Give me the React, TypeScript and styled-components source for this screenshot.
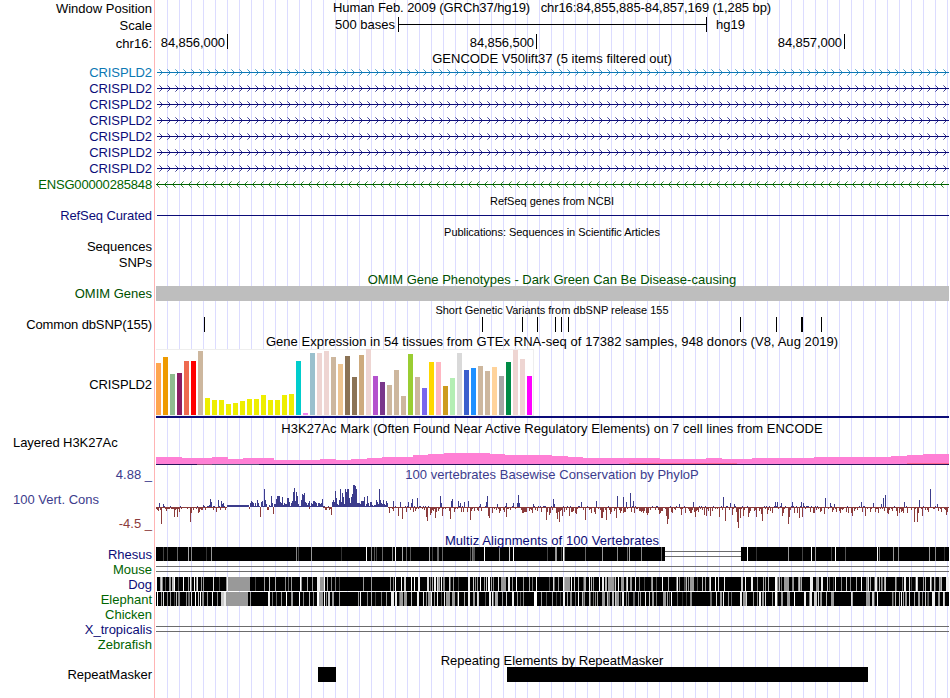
import * as React from 'react'
import styled, { createGlobalStyle } from 'styled-components'

const LEFT = 156
const WIDTH = 793

const colors = {
  black: '#000000',
  navy: '#0c0c78',
  blue: '#0c78b4',
  green: '#006400',
  omim: '#005000',
  wiggle: '#3c3c8c',
  wiggleDown: '#8c3c3c',
}

// x, height of the bar above the baseline
const peaksUp = [
  [159, 4], [163, 3], [164, 1], [203, 2], [209, 2], [210, 8], [211, 5], [213, 1], [218, 7], [221, 6], [222, 3],
  [223, 4], [251, 6], [252, 5], [257, 7], [261, 5], [262, 6], [264, 18], [265, 7], [266, 3], [271, 11], [275, 3],
  [276, 8], [277, 11], [278, 11], [279, 11], [280, 5], [281, 4], [282, 10], [284, 4], [285, 3], [286, 3],
  [287, 9], [288, 9], [289, 5], [292, 6], [293, 15], [294, 19], [295, 6], [296, 15], [297, 11], [298, 3],
  [301, 7], [302, 13], [303, 12], [304, 14], [305, 5], [309, 6], [313, 6], [314, 6], [315, 5], [322, 8],
  [332, 5], [333, 7], [334, 5], [335, 16], [336, 9], [339, 7], [340, 18], [341, 5], [342, 14], [343, 10],
  [344, 3], [345, 18], [346, 15], [347, 18], [348, 18], [349, 9], [350, 4], [351, 10], [352, 13], [353, 22],
  [354, 22], [355, 21], [356, 18], [357, 4], [361, 6], [362, 6], [363, 6], [364, 10], [367, 11], [370, 5],
  [371, 5], [376, 7], [377, 5], [379, 18], [380, 7], [383, 7], [386, 6], [387, 4], [393, 6], [400, 5], [408, 5],
  [411, 5], [412, 8], [417, 9], [411, 4], [440, 11], [441, 4], [451, 6], [452, 8], [458, 6], [460, 4], [464, 5],
  [468, 6], [480, 3], [486, 5], [487, 11], [497, 3], [506, 4], [513, 4], [517, 4], [518, 12], [519, 4], [533, 3],
  [553, 8], [554, 3], [581, 5], [596, 6], [617, 11], [623, 10], [626, 5], [630, 14], [633, 6], [679, 3],
  [693, 5], [723, 10], [730, 4], [734, 3], [775, 5], [777, 5], [781, 4], [792, 5], [801, 5], [803, 4], [825, 9],
  [830, 4], [834, 3], [861, 5], [873, 4], [881, 3], [883, 9], [885, 12], [904, 5], [919, 7], [930, 18], [937, 3],
]

const peaksDown = [
  [157, 3], [158, 4], [161, 17], [166, 4], [174, 10], [177, 10], [179, 5], [190, 15], [191, 6], [193, 3],
  [198, 6], [199, 5], [201, 3], [205, 3], [213, 3], [216, 5], [225, 3], [249, 2], [260, 10], [267, 3], [268, 3],
  [273, 7], [309, 2], [325, 3], [326, 3], [331, 8], [389, 6], [393, 4], [398, 9], [402, 12], [426, 10],
  [427, 14], [430, 8], [435, 11], [442, 9], [450, 12], [470, 13], [471, 4], [488, 9], [489, 11], [492, 6],
  [499, 6], [506, 10], [525, 5], [526, 5], [546, 13], [549, 8], [557, 12], [559, 15], [562, 9], [569, 9],
  [571, 5], [576, 7], [585, 13], [595, 7], [601, 11], [602, 11], [606, 13], [610, 7], [616, 11], [623, 6],
  [631, 5], [639, 4], [647, 8], [659, 7], [666, 9], [667, 17], [668, 12], [681, 8], [690, 6], [691, 6],
  [695, 10], [704, 8], [706, 9], [710, 9], [719, 10], [725, 14], [732, 8], [737, 15], [738, 21], [740, 11],
  [743, 9], [748, 10], [756, 10], [761, 7], [762, 14], [767, 7], [782, 9], [783, 6], [788, 17], [789, 10],
  [794, 6], [799, 11], [802, 10], [814, 6], [824, 7], [832, 5], [848, 6], [852, 9], [865, 9], [878, 6],
  [888, 7], [897, 9], [914, 15], [917, 15], [922, 9], [941, 5], [946, 8],
]

const pseudo = (x: number, seed: number) => {
  const v = Math.sin(x * 12.9898 + seed * 78.233) * 43758.5453
  return v - Math.floor(v)
}

const gtexBars: [string, number][] = [
  ['#ffa54f', 52], ['#ee9a00', 58], ['#8fbc8f', 41], ['#8b1c62', 42], ['#ee6a50', 54], ['#ff0000', 54],
  ['#cdb79e', 64], ['#eeee00', 17], ['#eeee00', 15], ['#eeee00', 15], ['#eeee00', 11], ['#eeee00', 12],
  ['#eeee00', 14], ['#eeee00', 16], ['#eeee00', 16], ['#eeee00', 20], ['#eeee00', 15], ['#eeee00', 15],
  ['#eeee00', 20], ['#eeee00', 21], ['#00cdcd', 54], ['#ee82ee', 2], ['#9ac0cd', 62], ['#eed5d2', 62],
  ['#eed5d2', 64], ['#cdb79e', 58], ['#eec591', 51], ['#8b7355', 59], ['#8b7355', 38], ['#cdaa7d', 60],
  ['#eed5d2', 66], ['#b452cd', 39], ['#7a378b', 33], ['#cdb79e', 30], ['#cdb79e', 45], ['#cdb79e', 19],
  ['#9acd32', 61], ['#cdb79e', 38], ['#7a67ee', 27], ['#ffd700', 53], ['#ffb6c1', 53], ['#cd9b1d', 29],
  ['#b4eeb4', 37], ['#d9d9d9', 62], ['#3a5fcd', 45], ['#1e90ff', 47], ['#cdb79e', 49], ['#cdb79e', 44],
  ['#ffd39b', 48], ['#a6a6a6', 39], ['#008b45', 53], ['#eed5d2', 65], ['#eed5d2', 56], ['#ff00ff', 39],
]

// start x, height
const h3k27ac = [
  [156, 7], [182, 6], [212, 7], [228, 5], [243, 6], [274, 4], [320, 5], [336, 4], [351, 5], [367, 6], [382, 7],
  [413, 9], [428, 10], [444, 11], [490, 10], [505, 9], [552, 8], [568, 7], [583, 6], [660, 5], [706, 6],
  [722, 5], [752, 6], [814, 7], [891, 8], [907, 9], [923, 10], [949, 10],
]

const snps = [204, 482, 522, 537, 555, 561, 568, 740, 776, 801, 802, 821]

// x, width, grey level (0-15)
type Stripe = [number, number, number]

const rhesus: Stripe[] = [
  [163, 1, 4], [167, 1, 4], [177, 1, 6], [188, 1, 10], [191, 1, 8], [206, 1, 3], [211, 1, 9], [296, 1, 8],
  [298, 1, 4], [311, 1, 9], [341, 1, 3], [366, 1, 15], [371, 1, 8], [374, 1, 5], [376, 1, 4], [382, 1, 6],
  [392, 1, 9], [395, 1, 15], [402, 1, 10], [406, 1, 6], [410, 1, 5], [429, 1, 10], [432, 1, 4], [437, 2, 6],
  [442, 1, 6], [470, 1, 5], [472, 1, 7], [473, 2, 5], [484, 1, 15], [499, 1, 8], [509, 1, 12], [513, 1, 15],
  [547, 1, 4], [555, 2, 9], [561, 1, 4], [563, 1, 15], [564, 1, 8], [585, 1, 6], [602, 1, 9], [617, 1, 8],
  [627, 1, 6], [629, 1, 10], [641, 1, 8], [661, 1, 6], [747, 1, 15], [756, 1, 3], [788, 1, 9], [802, 1, 4],
  [811, 1, 15], [815, 1, 9], [831, 1, 4], [835, 1, 15], [845, 1, 5], [877, 1, 15], [879, 1, 7], [893, 1, 9],
  [898, 1, 8], [929, 1, 9], [935, 1, 8], [944, 1, 3],
]

const dog: Stripe[] = [
  [156, 1, 15], [160, 1, 10], [161, 1, 13], [162, 1, 8], [165, 1, 5], [169, 2, 9], [172, 2, 11], [174, 1, 15],
  [178, 1, 5], [183, 1, 15], [188, 1, 9], [190, 1, 14], [191, 1, 7], [194, 1, 15], [196, 1, 8], [197, 1, 14],
  [201, 1, 9], [203, 1, 9], [213, 1, 13], [219, 1, 4], [226, 1, 9], [227, 1, 14], [228, 22, 9], [255, 1, 4],
  [264, 1, 9], [269, 1, 12], [275, 1, 10], [285, 1, 8], [288, 1, 6], [291, 1, 9], [300, 1, 15], [301, 1, 9],
  [307, 1, 10], [312, 1, 9], [317, 3, 14], [320, 4, 9], [324, 1, 15], [327, 1, 10], [331, 1, 8], [335, 1, 7],
  [339, 1, 4], [363, 1, 9], [371, 1, 9], [390, 1, 9], [393, 1, 8], [395, 1, 15], [401, 1, 15], [404, 2, 12],
  [411, 1, 15], [414, 1, 15], [418, 2, 14], [427, 2, 13], [430, 1, 7], [432, 1, 10], [434, 2, 14], [438, 1, 9],
  [441, 1, 15], [443, 2, 8], [450, 1, 6], [453, 1, 9], [458, 1, 4], [468, 2, 14], [473, 1, 12], [477, 1, 9],
  [480, 1, 15], [484, 1, 9], [488, 2, 15], [491, 1, 10], [493, 1, 8], [498, 1, 13], [501, 5, 9], [508, 2, 14],
  [512, 1, 9], [516, 1, 15], [523, 1, 9], [529, 1, 10], [536, 1, 15], [549, 1, 5], [558, 1, 9], [563, 1, 15],
  [565, 5, 9], [571, 1, 15], [578, 1, 11], [584, 2, 10], [589, 1, 15], [593, 1, 9], [599, 1, 15], [602, 2, 14],
  [605, 2, 11], [608, 6, 9], [615, 1, 12], [618, 1, 15], [621, 3, 9], [627, 1, 14], [630, 2, 9], [635, 1, 14],
  [639, 1, 8], [644, 1, 4], [651, 1, 8], [656, 1, 5], [662, 1, 15], [668, 1, 10], [677, 1, 15], [679, 1, 8],
  [684, 1, 5], [688, 1, 9], [690, 4, 9], [697, 1, 5], [705, 1, 9], [710, 1, 14], [715, 1, 15], [724, 1, 14],
  [741, 2, 12], [745, 1, 15], [751, 2, 14], [757, 1, 8], [765, 1, 9], [768, 1, 11], [775, 2, 15], [784, 5, 9],
  [792, 1, 8], [799, 1, 12], [801, 1, 10], [810, 3, 14], [816, 2, 9], [821, 2, 14], [829, 1, 5], [835, 1, 15],
  [841, 1, 8], [846, 1, 12], [850, 1, 8], [861, 1, 15], [866, 1, 9], [868, 1, 13], [875, 2, 14], [881, 1, 9],
  [885, 1, 12], [895, 1, 10], [902, 1, 7], [904, 2, 14], [909, 1, 13], [916, 1, 15], [923, 1, 9], [930, 1, 14],
  [934, 1, 11], [940, 1, 8], [946, 3, 14],
]

const elephant: Stripe[] = [
  [157, 1, 15], [161, 1, 9], [163, 1, 13], [167, 1, 8], [170, 1, 9], [174, 1, 4], [176, 1, 11], [178, 2, 8],
  [186, 1, 8], [188, 2, 6], [191, 1, 13], [195, 1, 15], [198, 1, 12], [200, 1, 15], [202, 2, 8], [207, 1, 9],
  [212, 1, 14], [217, 1, 8], [221, 3, 12], [224, 2, 14], [226, 22, 9], [250, 1, 9], [268, 2, 14], [272, 1, 7],
  [276, 1, 6], [281, 1, 9], [286, 1, 15], [291, 2, 9], [299, 1, 15], [303, 1, 8], [309, 1, 11], [313, 1, 8],
  [317, 2, 15], [319, 4, 9], [324, 1, 15], [326, 1, 8], [328, 2, 12], [332, 2, 9], [339, 1, 9], [358, 1, 9],
  [360, 1, 14], [367, 1, 8], [371, 1, 10], [375, 1, 4], [381, 1, 7], [386, 1, 9], [391, 3, 14], [395, 2, 14],
  [400, 3, 9], [404, 3, 9], [417, 2, 14], [426, 1, 8], [428, 3, 9], [431, 1, 14], [434, 1, 9], [437, 1, 14],
  [441, 1, 5], [444, 1, 14], [446, 4, 9], [453, 2, 9], [458, 1, 15], [464, 1, 10], [468, 2, 14], [473, 2, 9],
  [478, 1, 12], [485, 1, 5], [489, 2, 14], [492, 1, 14], [495, 2, 10], [502, 1, 9], [506, 1, 12], [512, 2, 14],
  [517, 1, 9], [523, 1, 8], [534, 3, 15], [541, 1, 9], [546, 1, 5], [552, 1, 9], [563, 2, 14], [567, 1, 10],
  [570, 2, 8], [575, 1, 6], [578, 1, 15], [584, 1, 8], [589, 1, 12], [597, 1, 10], [602, 3, 9], [607, 1, 12],
  [612, 2, 11], [616, 3, 9], [622, 2, 14], [628, 1, 8], [633, 2, 6], [640, 1, 9], [645, 1, 14], [652, 1, 9],
  [656, 1, 7], [663, 3, 9], [671, 1, 15], [677, 1, 6], [682, 1, 3], [686, 1, 4], [691, 1, 8], [710, 2, 6],
  [716, 1, 13], [720, 2, 9], [723, 1, 14], [731, 1, 6], [740, 2, 14], [743, 3, 9], [753, 1, 9], [759, 2, 14],
  [762, 2, 9], [765, 1, 13], [772, 1, 9], [775, 2, 15], [781, 2, 9], [787, 3, 9], [794, 1, 15], [804, 2, 14],
  [810, 2, 14], [814, 3, 12], [820, 1, 8], [826, 1, 11], [831, 3, 9], [852, 1, 10], [866, 4, 9], [872, 2, 12],
  [877, 1, 15], [892, 1, 8], [895, 1, 11], [901, 1, 14], [905, 2, 9], [909, 1, 13], [914, 1, 10], [918, 2, 9],
  [925, 1, 12], [932, 3, 14], [938, 2, 9], [943, 1, 13],
]

// single-base mismatches between the larger stripes, left out of fully aligned blocks
const mismatches = (seed: number, aligned: [number, number][]): Stripe[] => {
  const stripes: Stripe[] = []
  for (let x = 385; x < LEFT + WIDTH; x++) {
    const blocked = aligned.some(([from, to]) => x >= from && x < to)
    if (!blocked && pseudo(x, seed) > 0.87) {
      stripes.push([x, 1, 4 + Math.floor(pseudo(x, seed + 1) * 10)])
    }
  }
  return stripes
}

const dogStripes = [...mismatches(11, [[454, 467], [538, 548], [725, 741], [836, 841]]), ...dog]
const elephantStripes = [...mismatches(23, [[524, 534], [692, 710], [836, 851], [853, 865], [878, 891]]), ...elephant]

const grey = (level: number) => `rgb(${level * 17}, ${level * 17}, ${level * 17})`

const Drawing: React.FC<{ height: number; children: React.ReactNode }> = ({ height, children }) => (
  <Canvas width={WIDTH} height={height} viewBox={`${LEFT} 0 ${WIDTH} ${height}`} shapeRendering="crispEdges">
    {children}
  </Canvas>
)

const Arrows: React.FC<{ color: string; reverse?: boolean }> = ({ color, reverse }) => {
  const inner = []
  const outer = []
  for (let x = reverse ? 156 : 162; x < LEFT + WIDTH; x += 8) {
    const back = reverse ? 1 : -1
    inner.push(`M${x + back} 6h1v1h-1zM${x + back} 8h1v1h-1zM${x + back * 2} 5h1v1h-1zM${x + back * 2} 9h1v1h-1z`)
    outer.push(`M${x + back * 3} 4h1v1h-1zM${x + back * 3} 10h1v1h-1z`)
  }
  return (
    <Drawing height={16}>
      <rect x={reverse ? 156 : 157} y={7} width={WIDTH} height={1} fill={color} />
      <path d={inner.join('')} fill={color} fillOpacity={0.8} />
      <path d={outer.join('')} fill={color} fillOpacity={0.5} />
    </Drawing>
  )
}

const Wiggle = () => {
  const up = new Map(peaksUp.map(p => [p[0], p[1]] as [number, number]))
  const down = new Map(peaksDown.map(p => [p[0], p[1]] as [number, number]))
  const bars = []
  for (let x = LEFT; x < LEFT + WIDTH; x++) {
    const conserved = (x > 226 && x < 323) || (x > 331 && x < 388)
    const r = pseudo(x, 3)
    let top = up.get(x) || 0
    let bottom = down.get(x) || 0
    if (!top && !bottom) {
      if (conserved) {
        top = x < 250 ? 2 : 1 + Math.floor(r * 4)
      } else if (r > 0.78) {
        top = 1
      } else {
        bottom = 1 + Math.floor(Math.pow(pseudo(x, 7), 2.2) * (x < 400 ? 3 : 6))
      }
    }
    if (top) {
      bars.push(<rect key={`u${x}`} x={x} y={24 - top} width={1} height={top} fill={colors.wiggle} />)
    }
    if (bottom || !conserved) {
      bars.push(<rect key={`d${x}`} x={x} y={24} width={1} height={bottom || 1} fill={colors.wiggleDown} />)
    }
  }
  return <Drawing height={49}>{bars}</Drawing>
}

const Stripes: React.FC<{ stripes: Stripe[]; gap?: [number, number] }> = ({ stripes, gap = [LEFT, 0] }) => (
  <Drawing height={15}>
    <rect x={LEFT} y={0} width={gap[0] - LEFT} height={14} fill="#000" />
    <rect x={gap[0] + gap[1]} y={0} width={LEFT + WIDTH - gap[0] - gap[1]} height={14} fill="#000" />
    {stripes.map(([x, width, level], i) => (
      <rect key={i} x={x} y={0} width={width} height={14} fill={grey(level)} />
    ))}
    <rect x={gap[0]} y={4} width={gap[1]} height={1} fill="#6c6c6c" />
    <rect x={gap[0]} y={9} width={gap[1]} height={1} fill="#6c6c6c" />
  </Drawing>
)

const DoubleLine = () => (
  <Drawing height={15}>
    <rect x={LEFT} y={4} width={WIDTH} height={1} fill="#6c6c6c" />
    <rect x={LEFT} y={9} width={WIDTH} height={1} fill="#6c6c6c" />
  </Drawing>
)

const Layered = () => (
  <Drawing height={28}>
    {h3k27ac.slice(0, -1).map(([x, height], i) => (
      <rect key={x} x={x} y={27 - height} width={h3k27ac[i + 1][0] - x} height={height} fill="#ff80d5" />
    ))}
    <rect x={629} y={26} width={108} height={1} fill="#ff6490" />
    <rect x={907} y={26} width={42} height={1} fill="#ff6490" />
    <rect x={LEFT} y={27} width={WIDTH} height={1} fill="#28145a" />
    <rect x={197} y={27} width={15} height={1} fill="#8c5078" />
    <rect x={212} y={27} width={47} height={1} fill="#505078" />
  </Drawing>
)

const Track: React.FC<{
  label?: string
  height?: number
  color?: string
  shift?: number
  spacing?: number
  children?: React.ReactNode
}> = ({ label, height = 16, color = colors.black, shift = 0, spacing = 0, children }) => (
  <Row $height={height}>
    <Label $color={color} $shift={shift} $spacing={spacing}>
      {label}
    </Label>
    <Data>{children}</Data>
  </Row>
)

const genes = [colors.blue, colors.navy, colors.navy, colors.navy, colors.navy, colors.navy, colors.navy]

const App = () => (
  <>
    <GlobalStyle />
    <Browser>
      <Track label="Window Position" height={17}>
        <Title $shift={-1} $spacing={-0.08}>
          {'Human Feb. 2009 (GRCh37/hg19)   chr16:84,855,885-84,857,169 (1,285 bp)'}
        </Title>
      </Track>
      <Track label="Scale" height={17}>
        <ScaleLine>
          <ScaleText>500 bases</ScaleText>
          <ScaleBar />
          <ScaleText>hg19</ScaleText>
        </ScaleLine>
      </Track>
      <Track label="chr16:" height={16} shift={1}>
        <Ruler>
          <Position $width={72}>84,856,000</Position>
          <Position $width={309}>84,856,500</Position>
          <Position $width={308}>84,857,000</Position>
        </Ruler>
      </Track>
      <Track height={15}>
        <Title $shift={1} $spacing={0.03}>
          GENCODE V50lift37 (5 items filtered out)
        </Title>
      </Track>
      {genes.map((color, i) => (
        <Track key={i} label="CRISPLD2" color={color} shift={-1} spacing={-0.1}>
          <Arrows color={color} />
        </Track>
      ))}
      <Track label="ENSG00000285848" color={colors.green} shift={-1} spacing={-0.17}>
        <Arrows color={colors.green} reverse />
      </Track>
      <Track height={15}>
        <Title $small $shift={1}>
          RefSeq genes from NCBI
        </Title>
      </Track>
      <Track label="RefSeq Curated" color={colors.navy} shift={-1} spacing={-0.1}>
        <Drawing height={16}>
          <rect x={157} y={7} width={792} height={1} fill={colors.navy} />
        </Drawing>
      </Track>
      <Track height={15}>
        <Title $small $shift={1} $spacing={-0.04}>
          Publications: Sequences in Scientific Articles
        </Title>
      </Track>
      <Track label="Sequences" shift={-1} />
      <Track label="SNPs" shift={-1} />
      <Track height={15}>
        <Title $color={colors.omim} $shift={1}>
          OMIM Gene Phenotypes - Dark Green Can Be Disease-causing
        </Title>
      </Track>
      <Track label="OMIM Genes" height={15} color={colors.omim}>
        <OmimBar />
      </Track>
      <Track height={16}>
        <Title $small $shift={1}>
          Short Genetic Variants from dbSNP release 155
        </Title>
      </Track>
      <Track label="Common dbSNP(155)" shift={-1} spacing={-0.12}>
        <Drawing height={16}>
          {snps.map(x => (
            <rect key={x} x={x} y={0} width={1} height={15} fill="#000" />
          ))}
        </Drawing>
      </Track>
      <Track height={16}>
        <Title $spacing={0.055}>
          Gene Expression in 54 tissues from GTEx RNA-seq of 17382 samples, 948 donors (V8, Aug 2019)
        </Title>
      </Track>
      <Track label="CRISPLD2" height={69} shift={1} spacing={-0.1}>
        <Drawing height={69}>
          <rect x={156} y={0} width={378} height={67} fill="#eeeeee" />
          <rect x={156} y={1} width={377} height={65} fill="#ffffff" />
          {gtexBars.map(([color, height], i) => (
            <rect key={i} x={156 + i * 7} y={66 - height} width={5} height={height} fill={color} />
          ))}
          <rect x={LEFT} y={67} width={WIDTH} height={2} fill={colors.navy} />
        </Drawing>
      </Track>
      <Track height={19}>
        <Title $shift={1} $spacing={0.045}>
          H3K27Ac Mark (Often Found Near Active Regulatory Elements) on 7 cell lines from ENCODE
        </Title>
      </Track>
      <Row $height={28}>
        <LeftLabel $color={colors.black} $shift={-9} $spacing={-0.06}>
          Layered H3K27Ac
        </LeftLabel>
        <Data>
          <Layered />
        </Data>
      </Row>
      <Track label="4.88 _" height={18} color={colors.wiggle}>
        <Title $color={colors.wiggle} $spacing={0.035}>
          100 vertebrates Basewise Conservation by PhyloP
        </Title>
      </Track>
      <Row $height={49}>
        <WiggleLabels>
          <LeftLabel $color={colors.wiggle} $shift={8}>
            100 Vert. Cons
          </LeftLabel>
          <Label $color={colors.wiggleDown} $shift={8}>
            -4.5 _
          </Label>
        </WiggleLabels>
        <Data>
          <Wiggle />
        </Data>
      </Row>
      <Track height={15}>
        <Title $color={colors.navy} $shift={1} $spacing={0.09}>
          Multiz Alignments of 100 Vertebrates
        </Title>
      </Track>
      <Track label="Rhesus" height={15} color={colors.navy}>
        <Stripes stripes={rhesus} gap={[665, 76]} />
      </Track>
      <Track label="Mouse" height={15} color={colors.green}>
        <DoubleLine />
      </Track>
      <Track label="Dog" height={15} color={colors.navy}>
        <Stripes stripes={dogStripes} />
      </Track>
      <Track label="Elephant" height={15} color={colors.green}>
        <Stripes stripes={elephantStripes} />
      </Track>
      <Track label="Chicken" height={15} color={colors.green} />
      <Track label="X_tropicalis" height={15} color={colors.navy}>
        <DoubleLine />
      </Track>
      <Track label="Zebrafish" height={15} color={colors.green} />
      <Track height={15}>
        <Title $shift={1}>Repeating Elements by RepeatMasker</Title>
      </Track>
      <Track label="RepeatMasker" height={15}>
        <Drawing height={15}>
          <rect x={318} y={0} width={18} height={15} fill="#000" />
          <rect x={507} y={0} width={361} height={15} fill="#000" />
        </Drawing>
      </Track>
    </Browser>
  </>
)
export default App

const GlobalStyle = createGlobalStyle`
  body {
    margin: 0;
    background: #ffffff;
  }
`
const Browser = styled.div`
  width: 950px;
  height: 698px;
  overflow: hidden;
  font-family: 'Liberation Sans', Arial, sans-serif;
  font-size: 13px;
  background-color: #ffffff;
  background-image: linear-gradient(#ffb4b4, #ffb4b4),
    repeating-linear-gradient(to right, #dcdcff 0, #dcdcff 1px, transparent 1px, transparent 12px);
  background-position: 154px 0, 167px 0;
  background-size: 1px 100%, 783px 100%;
  background-repeat: no-repeat;
`
const Row = styled.div<{ $height: number }>`
  display: grid;
  grid-template-columns: ${LEFT}px ${WIDTH}px;
  height: ${props => props.$height}px;
`
const Label = styled.div<{ $color: string; $shift: number; $spacing?: number }>`
  display: flex;
  align-items: center;
  justify-content: flex-end;
  padding-right: 4px;
  line-height: 15px;
  letter-spacing: ${props => props.$spacing || 0}px;
  white-space: pre;
  color: ${props => props.$color};
  transform: translateY(${props => props.$shift}px);
`
const LeftLabel = styled(Label)`
  justify-content: flex-start;
  padding: 0 0 0 13px;
`
const WiggleLabels = styled.div`
  display: grid;
  grid-template-rows: 16px 33px;
`
const Data = styled.div`
  min-width: 0;
`
const Title = styled.div<{ $color?: string; $small?: boolean; $shift?: number; $spacing?: number }>`
  height: 100%;
  display: flex;
  align-items: center;
  justify-content: center;
  padding-right: 1px;
  white-space: pre;
  font-size: ${props => (props.$small ? 11 : 13)}px;
  line-height: 15px;
  letter-spacing: ${props => props.$spacing || 0}px;
  color: ${props => props.$color || colors.black};
  transform: translateY(${props => props.$shift || 0}px);
`
const ScaleLine = styled.div`
  display: flex;
  gap: 3px;
  padding-left: 179px;
`
const ScaleText = styled.span`
  line-height: 16px;
`
const ScaleBar = styled.div`
  box-sizing: border-box;
  width: 309px;
  height: 15px;
  margin-right: 6px;
  border: solid #000;
  border-width: 0 1px;
  background: linear-gradient(#000, #000) 0 7px / 100% 1px no-repeat;
`
const Ruler = styled.div`
  display: flex;
`
const Position = styled.div<{ $width: number }>`
  box-sizing: border-box;
  width: ${props => props.$width}px;
  height: 15px;
  padding-right: 2px;
  border-right: 1px solid #000;
  line-height: 18px;
  letter-spacing: -0.08px;
  text-align: right;
`
const OmimBar = styled.div`
  height: 15px;
  background: #bebebe;
`
const Canvas = styled.svg`
  display: block;
`
